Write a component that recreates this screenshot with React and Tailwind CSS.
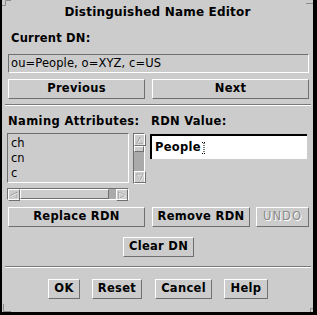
import React from 'react';

const raised = 'border border-t-white border-l-white border-b-[#6f6f6f] border-r-[#6f6f6f]';
const sunken = 'border border-t-[#6f6f6f] border-l-[#6f6f6f] border-b-white border-r-white';

const Btn = ({w, children, disabled}) => (
    <div className={`${raised} h-[20px] flex items-center justify-center shrink-0 text-[11.5px] ${disabled ? 'font-normal text-[#8a8a8a] [text-shadow:1px_1px_0_#fff] tracking-[1px]' : 'font-bold text-black tracking-[0.3px]'}`} style={{width: w}}>
        {children}
    </div>
);

const Sep = () => (
    <div className="ml-[3px] w-[306px] h-[2px] border-t border-t-[#7a7a7a] border-b border-b-white"/>
);

const Arrow = ({dir}) => {
    const pts = {
        up: 'M2 9 L5.5 2 L9 9 Z',
        down: 'M2 2 L5.5 9 L9 2 Z',
        left: 'M9 2 L2 5.5 L9 9 Z',
        right: 'M2 2 L9 5.5 L2 9 Z',
    }[dir];
    return (
        <div className={`${raised} w-[12px] h-[12px] shrink-0 flex items-center justify-center`}>
            <svg width="11" height="11" viewBox="0 0 11 11">
                <path d={pts} fill="none" stroke="#8a8a8a" strokeWidth="1"/>
                <path d={pts} fill="none" stroke="#fff" strokeWidth="1" transform="translate(0.6 0.6)" opacity="0.7"/>
            </svg>
        </div>
    );
};

const Corner = ({className, d}) => (
    <svg className={`absolute ${className}`} width="11" height="11" viewBox="0 0 11 11">
        <path d={d} fill="none" stroke="#8c8c8c" strokeWidth="1"/>
    </svg>
);

export default function App() {
    return (
        <div className="relative w-[317px] h-[315px] bg-[#cccccc] border-l-2 border-r-4 border-b-[3px] border-black font-['DejaVu_Sans',sans-serif] text-black overflow-hidden">
            {/* resize corners */}
            <div className="absolute -left-[2px] top-0 w-[10px] h-[10px] bg-[#cccccc]"/>
            <Corner className="-left-[2px] top-0" d="M0.5 11 V5.5 H5.5 V0.5 H11"/>
            <div className="absolute -right-[4px] top-0 w-[11px] h-[10px] bg-[#cccccc]"/>
            <Corner className="-right-[4px] top-0" d="M0 3.5 H7.5 V11"/>
            <div className="absolute -left-[2px] -bottom-[3px] w-[11px] h-[11px] bg-[#cccccc]"/>
            <Corner className="-left-[2px] -bottom-[3px]" d="M3.5 0 V7.5 H11"/>
            <div className="absolute -right-[4px] -bottom-[3px] w-[11px] h-[11px] bg-[#cccccc]"/>
            <Corner className="-right-[4px] -bottom-[3px]" d="M0 10.5 H4.5 V4.5 H10.5 V0"/>

            <div className="flex flex-col pt-[4px]">
                <div className="h-4 leading-4 text-[12px] font-bold text-center tracking-[0.2px]">Distinguished Name Editor</div>

                <div className="mt-[10px] ml-[9px] h-4 leading-4 text-[11.5px] font-bold tracking-[0.2px]">Current DN:</div>
                <div className={`${sunken} mt-[8px] ml-[6px] w-[301px] h-[19px] flex items-center pl-[2px] text-[11.5px] tracking-[0.1px]`}>
                    ou=People, o=XYZ, c=US
                </div>

                <div className="mt-[6px] ml-[6px] flex gap-[7px]">
                    <Btn w={137}>Previous</Btn>
                    <Btn w={157}>Next</Btn>
                </div>

                <div className="mt-[5px]"><Sep/></div>

                <div className="mt-[7px] ml-[5px] flex gap-[5px]">
                    <div className="w-[138px] flex flex-col">
                        <div className="ml-[1px] h-4 leading-4 text-[11.5px] font-bold tracking-[0.4px] whitespace-nowrap">Naming Attributes:</div>
                        <div className="mt-[4px] flex gap-[4px]">
                            <div className={`${sunken} w-[122px] h-[50px] pl-[3px] text-[11.5px] leading-[15px] pt-[2px]`}>
                                <div>ch</div>
                                <div>cn</div>
                                <div>c</div>
                            </div>
                            <div className={`${sunken} w-[12px] h-[51px] flex flex-col`}>
                                <Arrow dir="up"/>
                                <div className={`${raised} h-[6px] bg-[#cccccc]`}/>
                                <div className="flex-1 bg-[#aaaaaa]"/>
                                <Arrow dir="down"/>
                            </div>
                        </div>
                        <div className={`${sunken} mt-[4px] w-[122px] h-[12px] flex`}>
                            <Arrow dir="left"/>
                            <div className={`${raised} w-[89px] bg-[#cccccc]`}/>
                            <div className="flex-1 bg-[#aaaaaa]"/>
                            <Arrow dir="right"/>
                        </div>
                    </div>
                    <div className="flex flex-col">
                        <div className="ml-[1px] h-4 leading-4 text-[11.5px] font-bold tracking-[0.3px]">RDN Value:</div>
                        <div className="mt-[5px] w-[157px] h-[25px] bg-white border-t-2 border-l-2 border-black flex items-center pl-[3px] text-[11.5px] font-bold tracking-[0.3px]">
                            People
                            <svg width="4" height="12" viewBox="0 0 4 12" className="ml-[1px]">
                                <path d="M0 0.5 H4 M2 1 V11 M0 11.5 H4" stroke="#000" strokeWidth="1" strokeDasharray="1 1"/>
                            </svg>
                        </div>
                    </div>
                </div>

                <div className="mt-[7px] ml-[6px] flex">
                    <Btn w={137}>Replace RDN</Btn>
                    <div className="ml-[7px]"><Btn w={98}>Remove RDN</Btn></div>
                    <div className="ml-[6px]"><Btn w={53} disabled>UNDO</Btn></div>
                </div>

                <div className="mt-[10px] ml-[121px]">
                    <Btn w={71}>Clear DN</Btn>
                </div>

                <div className="mt-[9px]"><Sep/></div>

                <div className="mt-[11px] ml-[46px] flex">
                    <Btn w={32}>OK</Btn>
                    <div className="ml-[12px]"><Btn w={50}>Reset</Btn></div>
                    <div className="ml-[13px]"><Btn w={57}>Cancel</Btn></div>
                    <div className="ml-[12px]"><Btn w={44}>Help</Btn></div>
                </div>
            </div>
        </div>
    );
}
